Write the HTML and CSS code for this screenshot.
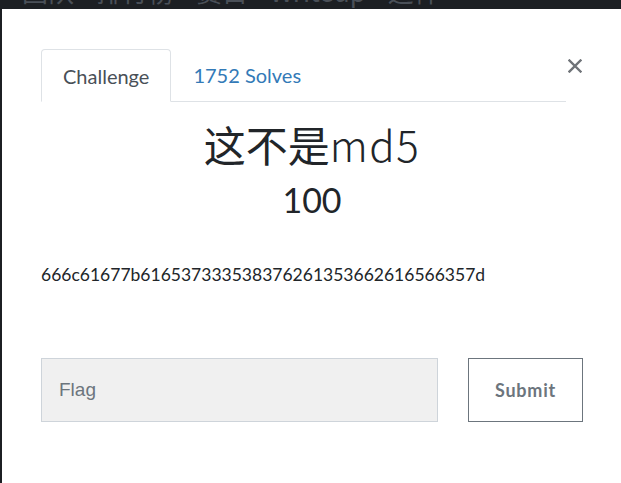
FILE: index.html
```html
<!DOCTYPE html>
<html lang="zh">
<head>
<meta charset="utf-8">
<link rel="stylesheet" href="styles.css">
</head>
<body>
<div class="topnav">
  <span class="nav-item">团队</span>
  <span class="nav-item">排行榜</span>
  <span class="nav-item">赛目</span>
  <span class="nav-item">Writeup</span>
  <span class="nav-item">这样</span>
</div>
<div class="modal">
  <button class="close" aria-label="Close">
    <svg width="14" height="14" viewBox="0 0 14 14"><path d="M1.5 1.5 L12.5 12.5 M12.5 1.5 L1.5 12.5" stroke="#6f7378" stroke-width="2.4" stroke-linecap="square"/></svg>
  </button>
  <div class="content">
    <div class="tabs">
      <div class="tab active">Challenge</div>
      <div class="tab link">1752 Solves</div>
    </div>
    <h3 class="title">这不是<span class="latin">md5</span></h3>
    <h4 class="value">100</h4>
    <p class="desc">666c61677b616537333538376261353662616566357d</p>
    <div class="submit-row">
      <input class="flag" type="text" placeholder="Flag">
      <button class="submit">Submit</button>
    </div>
  </div>
</div>
</body>
</html>
```
FILE: styles.css
```css
html, body {
  margin: 0;
  padding: 0;
  height: 100%;
  overflow: hidden;
  background: #1c1f23;
}
body {
  font-family: Lato, "Noto Sans CJK SC", sans-serif;
}
.topnav {
  height: 9px;
  overflow: hidden;
  display: flex;
  gap: 22px;
  padding-left: 22px;
  font-family: "Noto Sans CJK SC", sans-serif;
  font-size: 26px;
  line-height: 26px;
  color: #4a5058;
}
.nav-item {
  margin-top: -22px;
  display: block;
}
.modal {
  position: relative;
  margin-left: 2px;
  width: 660px;
  height: 500px;
  background: #fff;
  padding: 40px 0 0 39px;
  box-sizing: border-box;
}
.close {
  position: absolute;
  left: 564px;
  top: 48px;
  width: 18px;
  height: 18px;
  padding: 2px;
  border: 0;
  background: none;
}
.content {
  width: 542px;
}
.tabs {
  display: flex;
  width: 525px;
  border-bottom: 1px solid #dee2e6;
}
.tab {
  height: 51px;
  box-sizing: border-box;
  padding: 0 21px;
  display: flex;
  align-items: center;
  font-size: 20px;
  margin-bottom: -1px;
  border: 1px solid transparent;
  border-radius: 4px 4px 0 0;
}
.tab.active {
  color: #495057;
  border-color: #dee2e6 #dee2e6 #fff;
  background: #fff;
  height: 53px;
}
.tab.link {
  color: #337ab7;
  padding-left: 21px;
}
.title {
  margin: 14px 0 0;
  text-align: center;
  font-weight: 400;
  font-size: 42px;
  line-height: 56px;
  color: #212529;
  font-family: "Noto Sans CJK SC", sans-serif;
}
.latin {
  font-weight: 300;
  letter-spacing: 1.5px;
}
.value {
  margin: 8px 0 0;
  text-align: center;
  font-weight: 400;
  font-size: 34px;
  line-height: 40px;
  color: #212529;
}
.desc {
  margin: 43px 0 0;
  font-size: 17.5px;
  line-height: 24px;
  color: #212529;
}
.submit-row {
  display: flex;
  gap: 30px;
  margin-top: 71px;
}
.flag {
  width: 397px;
  height: 64px;
  flex: none;
  box-sizing: border-box;
  background: #f0f0f0;
  border: 1px solid #ced4da;
  padding: 0 17px;
  font-family: "Liberation Sans", Arial, sans-serif;
  font-size: 19px;
  color: #495057;
  outline: none;
  margin: 0;
}
.flag::placeholder {
  color: #6c757d;
}
.submit {
  width: 115px;
  height: 64px;
  flex: none;
  box-sizing: border-box;
  background: #fff;
  border: 1px solid #6c757d;
  color: #6c757d;
  font-family: Lato, sans-serif;
  font-weight: 700;
  font-size: 18px;
  letter-spacing: 0.8px;
  margin: 0;
  padding: 0;
}
```
